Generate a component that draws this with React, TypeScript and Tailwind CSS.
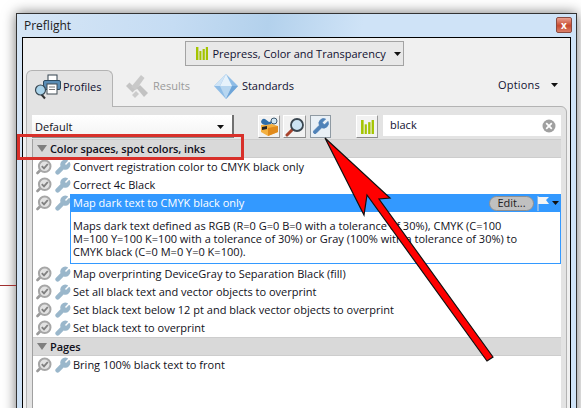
import React from "react";

const WRENCH = "M14.7 6.3a1 1 0 0 0 0 1.4l1.6 1.6a1 1 0 0 0 1.4 0l3.77-3.77a6 6 0 0 1-7.94 7.94l-6.91 6.91a2.12 2.12 0 0 1-3-3l6.91-6.91a6 6 0 0 1 7.94-7.94l-3.76 3.76z";

function CheckLens() {
  return (
    <svg width="16" height="16" viewBox="0 0 16 16" className="shrink-0">
      <path d="M4 11.5 L1.5 14" stroke="#9a9a9a" strokeWidth="2.6" strokeLinecap="round" />
      <circle cx="8.7" cy="7.3" r="5.8" fill="#e2e2e2" stroke="#a6a6a6" strokeWidth="2" />
      <path d="M5.8 7.2 L8 9.4 L11.8 5" fill="none" stroke="#808080" strokeWidth="1.9" />
    </svg>
  );
}

function RowWrench() {
  return (
    <svg width="17" height="17" viewBox="0 0 24 24" className="shrink-0">
      <path d={WRENCH} fill="#9ab7cb" stroke="#9ab7cb" strokeWidth="2.2" strokeLinejoin="round" />
    </svg>
  );
}

function Bars({ w = 12, h = 13 }: { w?: number; h?: number }) {
  return (
    <svg width={w} height={h} viewBox="0 0 12 13" className="shrink-0">
      <rect x="0" y="0" width="2.4" height="13" fill="#a4c400" />
      <rect x="3.4" y="4" width="2" height="9" fill="#a4c400" />
      <rect x="6.6" y="2" width="2.2" height="11" fill="#a4c400" />
      <rect x="9.8" y="0" width="2.2" height="13" fill="#a4c400" />
    </svg>
  );
}

function Caret({ color = "#111" }: { color?: string }) {
  return (
    <svg width="7" height="4" viewBox="0 0 7 4" className="shrink-0">
      <path d="M0 0 H7 L3.5 4 Z" fill={color} />
    </svg>
  );
}

function ProfilesIcon() {
  return (
    <svg width="27" height="26" viewBox="0 0 27 26" className="shrink-0">
      <rect x="14" y="1" width="9" height="6" fill="#fff" stroke="#33424f" />
      <rect x="9.5" y="6.5" width="17" height="9" rx="1.5" fill="#5a8db5" stroke="#2c4a60" />
      <rect x="13" y="10" width="10" height="10" fill="#fff" stroke="#3f4a52" />
      <path d="M15 13 H21 M15 15.5 H21" stroke="#777" />
      <path d="M7 20 L11 24.5" stroke="#333" strokeWidth="2" />
      <circle cx="6.5" cy="16" r="5" fill="#a9d3ea" stroke="#3a4a55" strokeWidth="1.2" />
    </svg>
  );
}

function ResultsIcon() {
  return (
    <svg width="25" height="25" viewBox="0 0 25 25" className="shrink-0">
      <path d="M2 12 L5.5 8.5 L12 15 L8.5 18.5 Z" fill="#c4c4c4" />
      <path d="M7 13 L17 1 L20.5 4 L12 16 Z" fill="#c9c9c9" />
      <path d="M12.5 14 L16 11 L24 19 L20 23 Z" fill="#c2c2c2" />
      <path d="M8 21 L12 17 L15 20 L11 24 Z" fill="#cbcbcb" />
    </svg>
  );
}

function DiamondIcon() {
  return (
    <svg width="24" height="25" viewBox="0 0 24 25" className="shrink-0">
      <path d="M12 0 L24 12 L12 25 L0 12 Z" fill="#8ebce6" />
      <path d="M12 0 L18 12 H6 Z" fill="#e6f2fb" />
      <path d="M6 12 H18 L12 25 Z" fill="#b7d6f0" />
      <path d="M12 0 L6 12 H0 Z" fill="#cfe4f6" />
      <path d="M18 12 H24 L12 25 Z" fill="#6fa5d8" />
    </svg>
  );
}

function ToolBoxIcon() {
  return (
    <svg width="19" height="19" viewBox="0 0 19 19">
      <path d="M1 8 L12 7 L18 9 L18 15 L8 19 L1 15 Z" fill="#f4b040" />
      <path d="M8 19 L18 15 L18 9 L8 11 Z" fill="#e08a1c" />
      <path d="M2 10 L7 9 L7 12 L2 13 Z" fill="#222" />
      <path d="M1 5 Q2 1 5 2 L9 5 L12 4 L11 7 L6 8 Q2 8 1 5 Z" fill="#2f6ea8" />
      <circle cx="14" cy="4" r="3" fill="#cfe6f5" stroke="#3f5a70" />
    </svg>
  );
}

function LensIcon() {
  return (
    <svg width="20" height="20" viewBox="0 0 20 20">
      <path d="M8 12 L2 18" stroke="#a8432c" strokeWidth="3" strokeLinecap="round" />
      <circle cx="12" cy="8" r="6" fill="#cde4f4" stroke="#3a4650" strokeWidth="1.8" />
    </svg>
  );
}

function ToolButton({ children, active, width }: { children: React.ReactNode; active?: boolean; width: string }) {
  return (
    <div
      className={`${width} h-[23px] flex items-center justify-center border ${
        active ? "bg-[#e9f0f6] border-[#8f9aa3]" : "bg-[#f2f2f2] border-t-white border-l-white border-r-[#9a9a9a] border-b-[#8a8a8a]"
      }`}
    >
      {children}
    </div>
  );
}

function Row({ text }: { text: string }) {
  return (
    <div className="h-[18px] flex items-center pl-[3px]">
      <CheckLens />
      <div className="ml-[2px] w-[19px]">
        <RowWrench />
      </div>
      <span className="text-[#101020]">{text}</span>
    </div>
  );
}

function Section({ title }: { title: string }) {
  return (
    <div className="h-[19px] flex items-center bg-[#d9d9d9] border-y border-[#cdcdcd] pl-[3px]">
      <svg width="11" height="7" viewBox="0 0 11 7" className="shrink-0 ml-px">
        <path d="M0 0 H10 L5 7 Z" fill="#7f7f7f" />
      </svg>
      <span className="ml-[2px] font-semibold tracking-[-0.1px] text-[#101020]">{title}</span>
    </div>
  );
}

export default function App() {
  return (
    <div
      className="relative w-[581px] h-[408px] overflow-hidden bg-white pl-[16px] pt-[13px] pr-[4px] text-[11px] leading-[16px]"
      style={{ fontFamily: '"Open Sans", "Noto Sans", sans-serif' }}
    >
      <div className="absolute left-0 top-[285px] w-[16px] h-px bg-[#a03030]" />
      <div className="h-[420px] border border-[#333] bg-[linear-gradient(100deg,#d6e6f6_0%,#c5dcf3_25%,#b3d1ec_40%,#cfe3f7_55%,#cfe3f7_100%)] shadow-[0_0_12px_rgba(0,0,0,0.55)] px-[5px]">
        <div className="h-[23px] flex items-center justify-between">
          <span className="text-[12px] text-[#222] pl-[2px]">Preflight</span>
          <div className="w-[16px] h-[16px] border border-[#8a4a40] rounded-[2px] bg-[linear-gradient(#e8a090,#c8492f_55%,#d9806a)] flex items-center justify-center -mr-[1px] mb-[2px]">
            <span className="text-white font-bold text-[10px] leading-none">x</span>
          </div>
        </div>
        <div className="h-[380px] border border-black bg-[#f0f0f0] pt-[3px] pl-[3px] pr-[3px]">
          <div className="flex justify-center pr-[3px]">
            <div className="ml-[-2px] w-[219px] h-[25px] border border-[#a3a3a3] bg-[#e8e8e8] flex items-center pl-[10px] gap-[5px]">
              <Bars />
              <span className="text-[#101030] whitespace-nowrap">Prepress, Color and Transparency</span>
              <div className="ml-[3px]"><Caret /></div>
            </div>
          </div>

          <div className="mt-[3px] h-[37px] flex items-center relative">
            <div className="w-[87px] h-[37px] bg-[#e3e3e3] border border-b-0 border-[#b3b3b3] rounded-t-[6px] flex items-center pl-[7px] gap-[2px] pb-[3px] relative z-10 -mb-px">
              <ProfilesIcon />
              <span className="text-[#101030]">Profiles</span>
            </div>
            <div className="ml-[11px] flex items-center gap-[4px] pb-[3px]">
              <ResultsIcon />
              <span className="text-[#9a9a9a]">Results</span>
            </div>
            <div className="ml-[24px] flex items-center gap-[4px] pb-[3px]">
              <DiamondIcon />
              <span className="text-[#101030]">Standards</span>
            </div>
            <div className="ml-auto mr-[9px] flex items-center gap-[11px] pb-[5px]">
              <span className="text-[#101030] tracking-[0.2px]">Options</span>
              <Caret />
            </div>
          </div>

          <div className="h-[320px] bg-[#e3e3e3] border border-[#b3b3b3] rounded-tr-[6px] pt-[8px] px-[5px]">
            <div className="flex h-[24px]">
              <div className="w-[202px] h-[23px] bg-[linear-gradient(#fff,#f4f4f4)] border-r-2 border-b-2 border-r-[#707070] border-b-[#8a8a8a] flex items-center justify-between pl-[3px] pr-[8px] pt-[2px]">
                <span className="text-[#101020]">Default</span>
                <Caret />
              </div>
              <div className="ml-[24px] flex">
                <ToolButton width="w-[22px]"><ToolBoxIcon /></ToolButton>
                <div className="ml-[3px]"><ToolButton width="w-[23px]"><LensIcon /></ToolButton></div>
                <div className="ml-[4px]">
                  <ToolButton width="w-[21px]" active>
                    <svg width="19" height="19" viewBox="0 0 24 24">
                      <path d={WRENCH} fill="#4f82b8" stroke="#4f82b8" />
                    </svg>
                  </ToolButton>
                </div>
              </div>
              <div className="ml-[25px]">
                <ToolButton width="w-[22px]"><Bars w={13} h={14} /></ToolButton>
              </div>
              <div className="ml-[5px] flex-1 h-[21px] bg-white flex items-center justify-between pl-[7px] pr-[5px]">
                <span className="text-[#101030] pb-[2px]">black</span>
                <svg width="14" height="14" viewBox="0 0 14 14">
                  <circle cx="7" cy="7" r="6.5" fill="#a0a0a0" />
                  <path d="M4.2 4.2 L9.8 9.8 M9.8 4.2 L4.2 9.8" stroke="#fff" strokeWidth="1.8" />
                </svg>
              </div>
            </div>

            <div className="h-[290px] bg-white border-l border-[#a0a0a0]">
              <Section title="Color spaces, spot colors, inks" />
              <Row text="Convert registration color to CMYK black only" />
              <Row text="Correct 4c Black" />
              <div className="flex pl-[3px]">
                <div className="flex items-start h-[18px] pt-px shrink-0">
                  <CheckLens />
                  <div className="ml-[2px] w-[19px]"><RowWrench /></div>
                </div>
                <div className="flex-1 -ml-[3px] border border-[#3399ff] border-t-0">
                  <div className="h-[18px] bg-[#3399ff] flex items-center pl-[2px] pr-[1px]">
                    <span className="text-white">Map dark text to CMYK black only</span>
                    <div className="ml-auto w-[45px] h-[15px] rounded-full bg-[#c0c0c0] border border-[#8f8f8f] flex items-center justify-center text-[#222]">Edit...</div>
                    <svg width="14" height="15" viewBox="0 0 14 15" className="ml-[3px]">
                      <path d="M1 0 V15" stroke="#d8d8d8" />
                      <path d="M1 1 H12 L9 4 L12 8 H1 Z" fill="#f4f4f4" />
                    </svg>
                    <div className="ml-[1px]"><Caret /></div>
                  </div>
                  <div className="h-[51px] pt-[7px] pl-[2px] leading-[13px] text-[#101020] whitespace-nowrap">
                    <div>Maps dark text defined as RGB (R=0 G=0 B=0 with a tolerance of 30%), CMYK (C=100</div>
                    <div>M=100 Y=100 K=100 with a tolerance of 30%) or Gray (100% with a tolerance of 30%) to</div>
                    <div>CMYK black (C=0 M=0 Y=0 K=100).</div>
                  </div>
                </div>
              </div>
              <div className="h-[1px]" />
              <Row text="Map overprinting DeviceGray to Separation Black (fill)" />
              <Row text="Set all black text and vector objects to overprint" />
              <Row text="Set black text below 12 pt and black vector objects to overprint" />
              <Row text="Set black text to overprint" />
              <Section title="Pages" />
              <Row text="Bring 100% black text to front" />
            </div>
          </div>
        </div>
      </div>

      <div className="absolute left-[17px] top-[134px] w-[227px] h-[26px] border-[3px] border-[#d8302a]" />
      <svg className="absolute left-0 top-0" width="581" height="408" viewBox="0 0 581 408">
        <path
          d="M325 138 L390 198 L379 199 L493 357 L487 361 L367 195 L364 215 Z"
          fill="#ff0000"
          stroke="#111"
          strokeWidth="1.2"
          strokeLinejoin="miter"
        />
      </svg>
    </div>
  );
}
